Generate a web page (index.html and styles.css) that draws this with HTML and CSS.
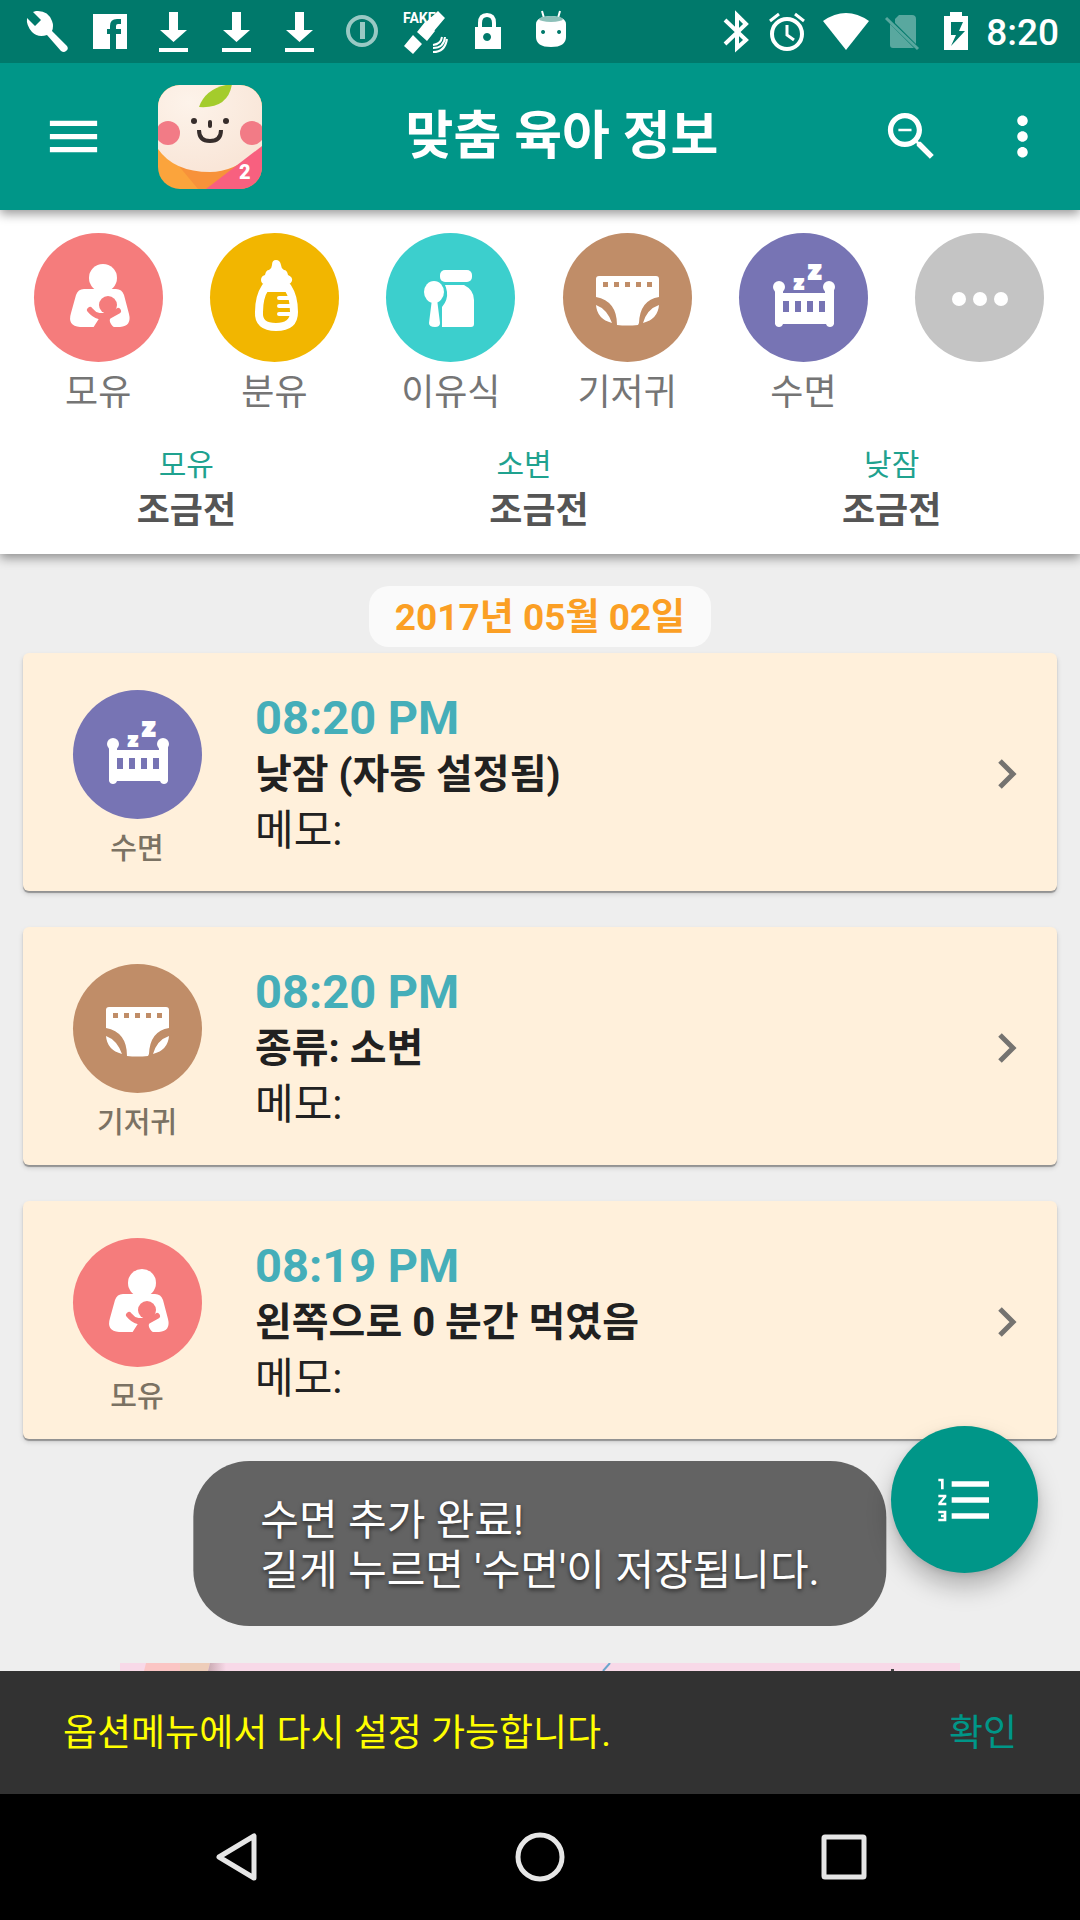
FILE: index.html
```html
<!DOCTYPE html>
<html lang="ko">
<head>
<meta charset="utf-8">
<meta name="viewport" content="width=device-width, initial-scale=1">
<title>맞춤 육아 정보</title>
<link rel="stylesheet" href="styles.css">
</head>
<body>
<svg class="sprite" aria-hidden="true">
  <symbol id="ic-download" viewBox="0 0 63 63">
    <path d="M27 12h9v18h9L31.500 42 18 30h9zM17 48h29v4H17z"/>
  </symbol>
  <symbol id="ic-nursing" viewBox="0 0 129 129">
    <circle cx="69" cy="45" r="14"/>
    <path d="M50 56h32q6 0 8 6l5 19q3 12-9 13H46q-13-1-9-14l5-18q2-6 8-6z"/>
    <circle cx="74" cy="72" r="9" fill="#f57c7c"/>
    <path d="M56 77q4 5 9 6h10l9-5" fill="none" stroke="#f57c7c" stroke-width="6" stroke-linecap="round" stroke-linejoin="round"/>
    <path d="M66 80h14q-5 4-4 9 2 5 6 6H59l7-11z" fill="#f57c7c"/>
  </symbol>
  <symbol id="ic-diaper" viewBox="0 0 129 129">
    <path fill-rule="evenodd" d="M36 43h57q3 0 3 3v18q-19 3-20 26l-1 2q-11 1-21 0 0-24-21-28V46q0-3 3-3zm4 6v5h5v-5zm11 0v5h5v-5zm11 0v5h5v-5zm11 0v5h5v-5zm11 0v5h5v-5z"/>
    <path d="M33 72q11 4 16 18-15-4-16-18zM96 72q-12 4-16 18 15-4 16-18z"/>
  </symbol>
  <symbol id="ic-crib" viewBox="0 0 129 129">
    <circle cx="40" cy="54" r="6"/><circle cx="90" cy="54" r="6"/>
    <path fill-rule="evenodd" d="M36 56h8v4h42v-4h9v35q-1 3-4 3t-4-3H44q-1 3-4 3t-4-3zm8 12v11h6V68zm12 0v11h6V68zm12 0v11h6V68zm12 0v11h6V68z"/>
  </symbol>
</svg>

<header class="statusbar">
  <div class="statusbar__left">
    <svg viewBox="0 0 63 63"><path d="M20 11q12-1 16 10 2 5 0 10l15 15q2 3-1 5-2 2-5 0L31 35q-9 3-15-3-6-7-5-14l8 8 6-6-8-8z"/></svg>
    <svg viewBox="0 0 63 63"><path d="M14 14h34v35H37V34h5v-5h-5v-3q0-2 2-2h3v-5h-4q-7 0-7 7v3h-3v5h3v15H14z"/></svg>
    <svg><use href="#ic-download"/></svg>
    <svg><use href="#ic-download"/></svg>
    <svg><use href="#ic-download"/></svg>
    <svg class="faded" viewBox="0 0 63 63"><circle cx="31" cy="31" r="14" fill="none" stroke="#fff" stroke-width="4"/><path d="M29 22h5v17h-5z"/></svg>
    <svg viewBox="0 0 63 63"><text class="fake" x="9" y="23">FAKE</text><path d="M44 11l7 7-11 13-9-8zM31 22l10 9-8 10-10-9zM19 35l9 9-9 10-9-8z"/><path d="M48 37q-1 7-9 8M51 37q-1 11-12 11M53 39q-2 13-14 13" fill="none" stroke="#fff" stroke-width="2"/></svg>
    <svg viewBox="0 0 63 63"><path fill-rule="evenodd" d="M18 27h3v-4q0-10 9-10t9 10v4h5v22H18zm7 0h10v-4q0-6-5-6t-5 6zm5 6a4 4 0 1 0 .1 0z"/></svg>
    <svg viewBox="0 0 63 63"><path d="M22 11l2 7M40 11l-2 7" stroke="#fff" stroke-width="2"/><path fill-rule="evenodd" d="M16 24q0-7 15-8 15 1 15 8v13q0 10-15 10T16 37zm7 6a2 2 0 1 0 .1 0zm16 0a2 2 0 1 0 .1 0z"/><ellipse cx="31" cy="19" rx="12" ry="3" fill="#8dc0b9"/></svg>
  </div>
  <div class="statusbar__right">
    <svg width="52" height="63" viewBox="0 0 52 63"><path d="M15 20l21 20-9 8V15l9 9-21 20" fill="none" stroke="#fff" stroke-width="4"/></svg>
    <svg width="52" height="63" viewBox="0 0 52 63"><g fill="none" stroke="#fff" stroke-width="3"><circle cx="25" cy="34" r="15" stroke-width="4"/><path d="M25 25v10l7 5M8 21l9-7M42 21l-9-7" /></g></svg>
    <svg width="64" height="63" viewBox="0 0 64 63"><path d="M9 21q23-16 46 0L32 50z"/></svg>
    <svg width="48" height="63" viewBox="0 0 48 63"><g opacity=".35"><path d="M21 15h13q4 0 4 4v25L17 23v-4zM12 24l24 24H15q-3 0-3-3z"/><path d="M8 18l32 31" stroke="#fff" stroke-width="3"/></g></svg>
    <svg width="60" height="63" viewBox="0 0 60 63"><path fill-rule="evenodd" d="M24 12h12v4h6v34H18V16h6zm1 10v13h5l-5 11 14-15h-6l4-9z"/></svg>
    <time>8:20</time>
  </div>
</header>

<header class="appbar">
  <button class="iconbtn" aria-label="메뉴"><svg viewBox="0 0 24 24"><path d="M3 18h18v-2H3v2zm0-5h18v-2H3v2zm0-7v2h18V6H3z"/></svg></button>
  <svg class="logo" viewBox="0 0 104 104" role="img" aria-label="앱 로고">
    <defs>
      <clipPath id="logo-clip"><rect width="104" height="104" rx="22"/></clipPath>
      <radialGradient id="skin" cx=".3" cy=".2" r=".8"><stop offset="0" stop-color="#fdf3ea"/><stop offset="1" stop-color="#f9e6d8"/></radialGradient>
    </defs>
    <g clip-path="url(#logo-clip)">
      <rect width="104" height="104" fill="#fba43c"/>
      <path d="M20 80l20 24h40l14-30z" fill="#f7923a"/>
      <path d="M0 0h104v62Q78 87 52 87 16 87 0 64z" fill="url(#skin)"/>
      <path d="M104 61v43H48z" fill="#f8607f"/>
      <path d="M41 22Q48 2 74-1 70 24 41 22z" fill="#a4cc2c"/>
      <circle cx="10" cy="48" r="12" fill="#f27b86"/><circle cx="94" cy="48" r="12" fill="#f27b86"/>
      <circle cx="36" cy="36" r="3" fill="#362d2b"/><circle cx="68" cy="36" r="3" fill="#362d2b"/>
      <path d="M52 37v4" stroke="#362d2b" stroke-width="4" stroke-linecap="round"/>
      <path d="M41 45q0 11 11 11t11-11" fill="none" stroke="#362d2b" stroke-width="4"/>
      <text class="logo__num" x="81" y="94">2</text>
    </g>
  </svg>
  <h1 class="appbar__title">맞춤 육아 정보</h1>
  <div class="appbar__actions">
    <button class="iconbtn" aria-label="검색"><svg viewBox="0 0 24 24"><path d="M15.500 14h-.79l-.28-.27C15.410 12.590 16 11.110 16 9.500 16 5.910 13.090 3 9.500 3S3 5.910 3 9.500 5.910 16 9.500 16c1.610 0 3.090-.59 4.230-1.570l.27.28v.79l5 4.990L20.490 19l-4.990-5zm-6 0C7.010 14 5 11.990 5 9.500S7.010 5 9.500 5 14 7.010 14 9.500 11.990 14 9.500 14zM7 9h5v1H7z"/></svg></button>
    <button class="iconbtn" aria-label="더보기"><svg viewBox="0 0 24 24"><path d="M12 8c1.100 0 2-.9 2-2s-.9-2-2-2-2 .9-2 2 .9 2 2 2zm0 2c-1.100 0-2 .9-2 2s.9 2 2 2 2-.9 2-2-.9-2-2-2zm0 6c-1.100 0-2 .9-2 2s.9 2 2 2 2-.9 2-2-.9-2-2-2z"/></svg></button>
  </div>
</header>

<section class="panel">
  <div class="shortcuts">
    <button class="shortcut"><svg class="badge badge--nursing"><use href="#ic-nursing"/></svg><span>모유</span></button>
    <button class="shortcut">
      <svg class="badge badge--bottle" viewBox="0 0 129 129">
        <path d="M62 32q0-5 4-5t5 5q0 3 3 5 3 0 4 5 5 2 4 6-2 4-6 4H56q-5-1-5-5 0-4 4-5 1-5 4-5 3-2 3-5z"/>
        <path d="M55 55h23q6 9 6 24 0 15-18 15T49 79q0-15 6-24z" fill="none" stroke="#fff" stroke-width="8"/>
        <path d="M69 65h12M69 73h12M69 81h12" stroke="#fff" stroke-width="4" stroke-linecap="round"/>
      </svg><span>분유</span></button>
    <button class="shortcut">
      <svg class="badge badge--food" viewBox="0 0 129 129">
        <rect x="54" y="37" width="32" height="12" rx="5"/>
        <path d="M59 52h19q10 5 10 15v24q0 3-3 3H56V74q6-7 5-15-1-5-2-7z"/>
        <ellipse cx="48" cy="59" rx="12" ry="13" fill="#3ccfcd"/>
        <ellipse cx="48" cy="59" rx="10" ry="11"/>
        <path d="M46 66h5l3 24q0 4-5 4-6 0-6-4z"/>
      </svg><span>이유식</span></button>
    <button class="shortcut"><svg class="badge badge--diaper"><use href="#ic-diaper"/></svg><span>기저귀</span></button>
    <button class="shortcut"><svg class="badge badge--sleep" viewBox="0 0 129 129"><use href="#ic-crib"/><text class="zz zz--small" x="55" y="56">z</text><text class="zz" x="69" y="46">z</text></svg><span>수면</span></button>
    <button class="shortcut" aria-label="더보기"><svg class="badge badge--more" viewBox="0 0 129 129"><circle cx="44" cy="66" r="7"/><circle cx="65" cy="66" r="7"/><circle cx="86" cy="66" r="7"/></svg></button>
  </div>
  <dl class="stats">
    <div class="stat"><dt>모유</dt><dd>조금전</dd></div>
    <div class="stat"><dt>소변&nbsp;&nbsp;&nbsp;&nbsp;</dt><dd>조금전</dd></div>
    <div class="stat"><dt>낮잠</dt><dd>조금전</dd></div>
  </dl>
</section>

<main class="timeline">
  <h2 class="date">2017년 05월 02일</h2>
  <ul class="cards">
    <li><a class="card" href="#">
      <span class="card__kind"><svg class="badge badge--sleep" viewBox="0 0 129 129"><use href="#ic-crib"/><text class="zz zz--small" x="55" y="56">z</text><text class="zz" x="69" y="46">z</text></svg>수면</span>
      <span class="card__text"><time>08:20 PM</time><strong>낮잠 (자동 설정됨)</strong><span>메모:</span></span>
      <svg class="chevron" viewBox="0 0 20 32"><path d="M3 3l13 13L3 29"/></svg>
    </a></li>
    <li><a class="card" href="#">
      <span class="card__kind"><svg class="badge badge--diaper"><use href="#ic-diaper"/></svg>기저귀</span>
      <span class="card__text"><time>08:20 PM</time><strong>종류: 소변</strong><span>메모:</span></span>
      <svg class="chevron" viewBox="0 0 20 32"><path d="M3 3l13 13L3 29"/></svg>
    </a></li>
    <li><a class="card" href="#">
      <span class="card__kind"><svg class="badge badge--nursing"><use href="#ic-nursing"/></svg>모유</span>
      <span class="card__text"><time>08:19 PM</time><strong>왼쪽으로 0 분간 먹였음</strong><span>메모:</span></span>
      <svg class="chevron" viewBox="0 0 20 32"><path d="M3 3l13 13L3 29"/></svg>
    </a></li>
  </ul>
  <div class="ad"><svg class="ad__art" viewBox="0 0 840 8" preserveAspectRatio="none">
    <defs><linearGradient id="fade"><stop offset="0" stop-color="#c9aab2"/><stop offset="1" stop-color="#f8d9e8"/></linearGradient></defs>
    <path d="M0 0h840v8H0z" fill="#f8d9e8"/>
    <path d="M26 0h62l-2 8H24z" fill="#fbc5c4"/><path d="M60 0h30l-2 8H60z" fill="#eecdb9"/>
    <path d="M90 0h16v8H88z" fill="url(#fade)"/>
    <path d="M490 0l-7 8" stroke="#6aa5cc" stroke-width="2"/><path d="M771 6h3v2h-3z" fill="#444"/>
  </svg></div>
  <div class="toast" role="status">수면 추가 완료!<br>길게 누르면 '수면'이 저장됩니다.</div>
  <button class="fab" aria-label="목록"><svg viewBox="0 0 24 24"><path d="M2 17h2v.5H3v1h1v.5H2v1h3v-4H2v1zm1-9h1V4H2v1h1v3zm-1 3h1.800L2 13.100v.9h3v-1H3.200L5 10.900V10H2v1zm5-6v2h14V5H7zm0 14h14v-2H7v2zm0-6h14v-2H7v2z"/></svg></button>
</main>

<div class="snackbar">
  <p>옵션메뉴에서 다시 설정 가능합니다.</p>
  <button>확인</button>
</div>

<nav class="navbar">
  <button aria-label="뒤로"><svg viewBox="0 0 64 64"><path d="M50 11v42L15 32z"/></svg></button>
  <button aria-label="홈"><svg viewBox="0 0 64 64"><circle cx="32" cy="32" r="22"/></svg></button>
  <button aria-label="최근 앱"><svg viewBox="0 0 64 64"><rect x="12" y="12" width="40" height="40" rx="1"/></svg></button>
</nav>
</body>
</html>
```
FILE: styles.css
```css
* { box-sizing: border-box; margin: 0; padding: 0; }

body {
  min-height: 100vh;
  display: flex;
  flex-direction: column;
  background: #eee;
  color: #212121;
  font-family: Roboto, "Noto Sans CJK KR", sans-serif;
}

button { border: 0; background: none; color: inherit; font: inherit; cursor: pointer; }
svg { display: block; flex: none; fill: #fff; }
.sprite { position: absolute; width: 0; height: 0; }
ul { list-style: none; }

/* System status bar */
.statusbar {
  display: flex;
  justify-content: space-between;
  align-items: center;
  height: 63px;
  padding: 0 21px 0 16px;
  background: #00796b;
  color: #fff;
}
.statusbar__left, .statusbar__right { display: flex; align-items: center; }
.statusbar__left svg { width: 63px; height: 63px; }
.statusbar time { padding-top: 2px; font-size: 37px; font-weight: 500; line-height: 61px; }
.faded { opacity: .6; }
.fake { font-size: 14px; font-weight: 700; }

/* App bar */
.appbar {
  position: relative;
  z-index: 1;
  display: flex;
  align-items: center;
  height: 147px;
  padding: 0 26px 0 42px;
  background: #009688;
  color: #fff;
  box-shadow: 0 4px 10px rgba(0, 0, 0, .4);
  clip-path: inset(0 0 -20px 0);
}
.iconbtn svg { width: 63px; height: 63px; }
.logo { width: 104px; height: 104px; margin-left: 53px; }
.logo__num { font-size: 20px; font-weight: 900; }
.appbar__title {
  flex: 1;
  margin-right: 18px;
  font-size: 52px;
  font-weight: 700;
  line-height: 64px;
  text-align: center;
}
.appbar__actions { display: flex; gap: 48px; }

/* Shortcut panel */
.panel {
  padding: 23px 12px 19px 10px;
  background: #fff;
  box-shadow: 0 4px 10px rgba(0, 0, 0, .4);
}
.shortcuts { display: grid; grid-template-columns: repeat(6, 1fr); }
.shortcut {
  display: flex;
  flex-direction: column;
  align-items: center;
  gap: 7px;
  color: #757575;
  font-size: 36px;
  line-height: 48px;
}
.badge { width: 129px; height: 129px; border-radius: 50%; }
.badge--nursing { background: #f57c7c; }
.badge--bottle { background: #f2b600; }
.badge--food { background: #3ccfcd; }
.badge--diaper { background: #c08d68; }
.badge--sleep { background: #7774b4; }
.badge--more { background: #c4c4c4; }
.zz { font-size: 26px; font-weight: 900; stroke: #fff; stroke-width: 2; }
.zz--small { font-size: 19px; }

.stats { display: grid; grid-template-columns: repeat(3, 1fr); margin-top: 26px; text-align: center; }
.stat dt { color: #1fa28f; font-size: 30px; line-height: 44px; }
.stat dd { color: #555; font-size: 36px; font-weight: 700; line-height: 48px; }

/* Timeline */
.timeline {
  position: relative;
  flex: 1;
  display: flex;
  flex-direction: column;
  padding-top: 32px;
}
.date {
  align-self: center;
  padding: 3px 26px 0;
  border-radius: 20px;
  background: #fafafa;
  color: #fb9f24;
  font-size: 37px;
  font-weight: 700;
  line-height: 58px;
}
.cards { display: flex; flex-direction: column; gap: 36px; padding: 6px 23px 0; }
.card {
  display: flex;
  align-items: center;
  height: 238px;
  padding: 4px 40px 0 31px;
  border-radius: 6px;
  background: #fff0db;
  box-shadow: 0 2px 1px rgba(0, 0, 0, .3), 0 3px 5px rgba(0, 0, 0, .15);
  color: inherit;
  text-decoration: none;
}
.card__kind {
  display: flex;
  flex-direction: column;
  align-items: center;
  gap: 10px;
  width: 166px;
  padding-top: 10px;
  color: #7b7263;
  font-size: 29px;
  font-weight: 500;
  line-height: 40px;
}
.card__text {
  flex: 1;
  display: flex;
  flex-direction: column;
  padding-left: 35px;
  font-size: 42px;
  line-height: 56px;
}
.card__text time { color: #45aeb9; font-size: 47px; font-weight: 700; line-height: 58px; }
.card__text strong { font-size: 40px; }
.chevron { width: 20px; height: 32px; fill: none; stroke: #757370; stroke-width: 5; }

.ad { margin-top: auto; padding: 0 120px; }
.ad__art { width: 100%; height: 8px; }

.toast {
  position: absolute;
  left: 50%;
  bottom: 45px;
  transform: translateX(-50%);
  padding: 35px 67px 30px;
  border-radius: 56px;
  background: #636363;
  color: #fff;
  font-size: 42px;
  line-height: 50px;
  text-shadow: 0 2px 4px rgba(0, 0, 0, .6);
  white-space: nowrap;
}
.fab {
  position: absolute;
  right: 42px;
  bottom: 98px;
  display: grid;
  place-items: center;
  width: 147px;
  height: 147px;
  border-radius: 50%;
  background: #009688;
  box-shadow: 0 14px 24px rgba(0, 0, 0, .25), 0 2px 6px rgba(0, 0, 0, .1);
}
.fab svg { width: 64px; height: 64px; }

/* Snackbar */
.snackbar {
  display: flex;
  justify-content: space-between;
  align-items: center;
  height: 123px;
  padding: 3px 63px 0;
  background: #323232;
  font-size: 37px;
  line-height: 48px;
}
.snackbar p { color: #ff0; }
.snackbar button { color: #009688; }

/* System navigation */
.navbar {
  display: flex;
  justify-content: center;
  align-items: center;
  gap: 240px;
  height: 126px;
  background: #000;
}
.navbar svg { width: 64px; height: 64px; fill: none; stroke: #e6e6e6; stroke-width: 5; stroke-linejoin: round; }
```
